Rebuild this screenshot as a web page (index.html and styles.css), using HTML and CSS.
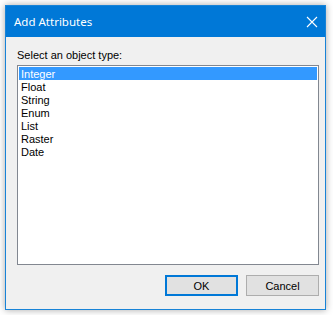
FILE: index.html
```html
<!DOCTYPE html>
<html>
<head>
  <title>Add Attributes</title>
  <meta charset="utf-8">
  <link rel="stylesheet" href="styles.css">
</head>
<body>
  <div class="window">
    <div class="titlebar">
      <span class="title">Add Attributes</span>
      <svg class="close" width="12" height="12" viewBox="0 0 12 12">
        <path d="M1 1 L11 11 M11 1 L1 11" stroke="#fff" stroke-width="1.1"/>
      </svg>
    </div>
    <div class="content">
      <div class="label">Select an object type:</div>
      <div class="listbox">
        <div class="item selected">Integer</div>
        <div class="item">Float</div>
        <div class="item">String</div>
        <div class="item">Enum</div>
        <div class="item">List</div>
        <div class="item">Raster</div>
        <div class="item">Date</div>
      </div>
      <div class="buttons">
        <button class="btn default">OK</button>
        <button class="btn">Cancel</button>
      </div>
    </div>
  </div>
</body>
</html>
```

FILE: styles.css
```css
body {
  margin: 0;
  background: #ffffff;
  width: 333px;
  height: 315px;
  overflow: hidden;
  font-family: 'Liberation Sans', Arial, sans-serif;
}

.window {
  margin: 5px 0 0 5px;
  width: 321px;
  height: 305px;
  box-sizing: border-box;
  border: 1px solid #1883d7;
  background: #f0f0f0;
  box-shadow: 0 0 7px rgba(0, 0, 0, 0.35);
  display: flex;
  flex-direction: column;
}

.titlebar {
  height: 31px;
  background: #0078d7;
  color: #fff;
  display: flex;
  align-items: center;
  justify-content: space-between;
  padding: 0 6px 0 8px;
  font-family: 'Noto Sans', sans-serif;
  font-size: 11.5px;
}

.close {
  margin-right: 1px;
}

.content {
  padding: 12px 6px 0 11px;
  font-size: 11px;
  color: #000;
}

.label {
  height: 16px;
  line-height: 13px;
}

.listbox {
  height: 200px;
  box-sizing: border-box;
  border: 1px solid #828790;
  background: #fff;
  padding: 1px 1px 0 1px;
}

.item {
  height: 13px;
  line-height: 14px;
  padding-left: 2px;
}

.item.selected {
  background: #3399ff;
  color: #fff;
}

.buttons {
  display: flex;
  justify-content: flex-end;
  gap: 8px;
  margin-top: 10px;
}

.btn {
  width: 73px;
  height: 21px;
  box-sizing: border-box;
  border: 1px solid #adadad;
  background: #e1e1e1;
  font-family: 'Liberation Sans', Arial, sans-serif;
  font-size: 11px;
  color: #000;
  padding: 0;
  margin: 0;
}

.btn.default {
  border: 2px solid #0078d7;
}
```
